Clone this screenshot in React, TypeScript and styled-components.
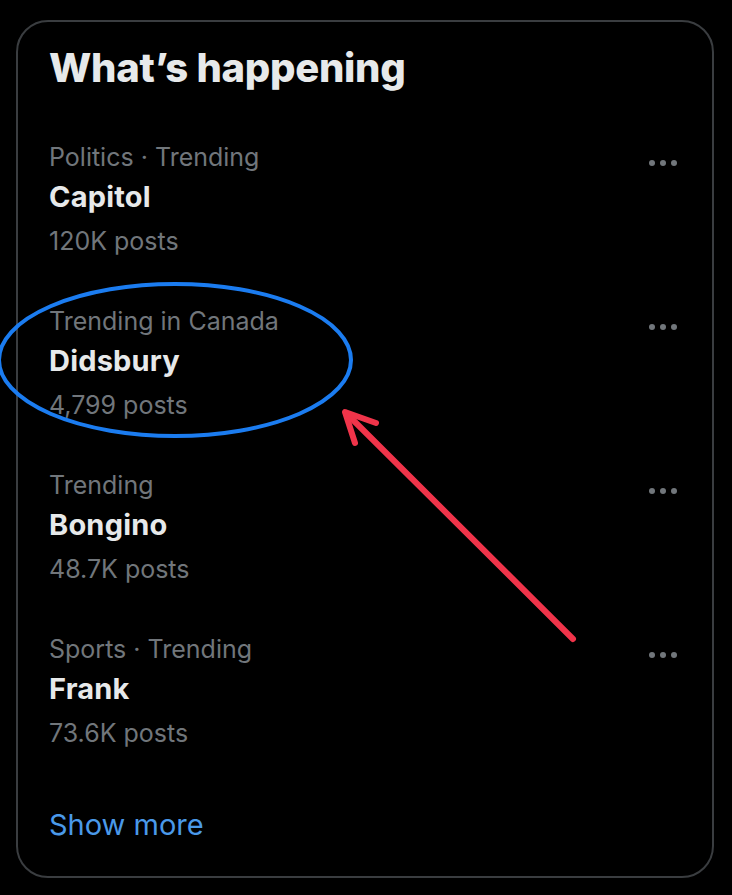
import React from "react";
import styled, { createGlobalStyle } from "styled-components";

const Global = createGlobalStyle`
  html, body { margin: 0; padding: 0; background: #000; }
  body { font-family: Inter, "Noto Sans", sans-serif; }
`;

const Page = styled.div`
  position: relative;
  width: 732px;
  height: 895px;
  background: #000;
  padding: 20px 18px 0 16px;
  box-sizing: border-box;
`;

const Card = styled.section`
  box-sizing: border-box;
  width: 698px;
  height: 858px;
  border: 2px solid #3a3d40;
  border-radius: 32px;
  padding: 22px 35px 0 31px;
  display: flex;
  flex-direction: column;
`;

const Title = styled.h2`
  margin: 0 0 27px;
  height: 48px;
  line-height: 48px;
  font-size: 40px;
  font-weight: 800;
  color: #e7e9ea;
  letter-spacing: -0.3px;
`;

const Row = styled.div`
  display: flex;
  justify-content: space-between;
  align-items: flex-start;
  padding: 20px 0;
  height: 164px;
  box-sizing: border-box;
`;

const Info = styled.div`
  display: flex;
  flex-direction: column;
`;

const Meta = styled.div<{ $h: number }>`
  height: ${(p) => p.$h}px;
  line-height: ${(p) => p.$h}px;
  font-size: 25px;
  color: #71767b;
`;

const Topic = styled.div`
  height: 44px;
  line-height: 44px;
  font-size: 29px;
  font-weight: 700;
  color: #e7e9ea;
  letter-spacing: 0.2px;
`;

const Dots = styled.div`
  display: flex;
  gap: 5px;
  margin-top: 21px;
  span {
    width: 6px;
    height: 6px;
    border-radius: 50%;
    background: #71767b;
  }
`;

const ShowMore = styled.a`
  margin-top: 30px;
  height: 40px;
  line-height: 40px;
  font-size: 29px;
  color: #4a99e9;
  text-decoration: none;
`;

const Overlay = styled.svg`
  position: absolute;
  left: 0;
  top: 0;
  pointer-events: none;
`;

const trends = [
  { cat: "Politics · Trending", name: "Capitol", posts: "120K posts" },
  { cat: "Trending in Canada", name: "Didsbury", posts: "4,799 posts" },
  { cat: "Trending", name: "Bongino", posts: "48.7K posts" },
  { cat: "Sports · Trending", name: "Frank", posts: "73.6K posts" },
];

export default function App() {
  return (
    <Page>
      <Global />
      <Card>
        <Title>What’s happening</Title>
        {trends.map((t) => (
          <Row key={t.name}>
            <Info>
              <Meta $h={36}>{t.cat}</Meta>
              <Topic>{t.name}</Topic>
              <Meta $h={44}>{t.posts}</Meta>
            </Info>
            <Dots>
              <span />
              <span />
              <span />
            </Dots>
          </Row>
        ))}
        <ShowMore href="#">Show more</ShowMore>
      </Card>
      <Overlay width="732" height="895" viewBox="0 0 732 895">
        <ellipse cx="175" cy="360" rx="176" ry="76" fill="none" stroke="#1b7cf0" strokeWidth="4" />
        <g stroke="#f0344a" strokeWidth="6" strokeLinecap="round" strokeLinejoin="round" fill="none">
          <line x1="573" y1="639" x2="346" y2="413" />
          <polyline points="376,423 345,412 355,443" />
        </g>
      </Overlay>
    </Page>
  );
}
